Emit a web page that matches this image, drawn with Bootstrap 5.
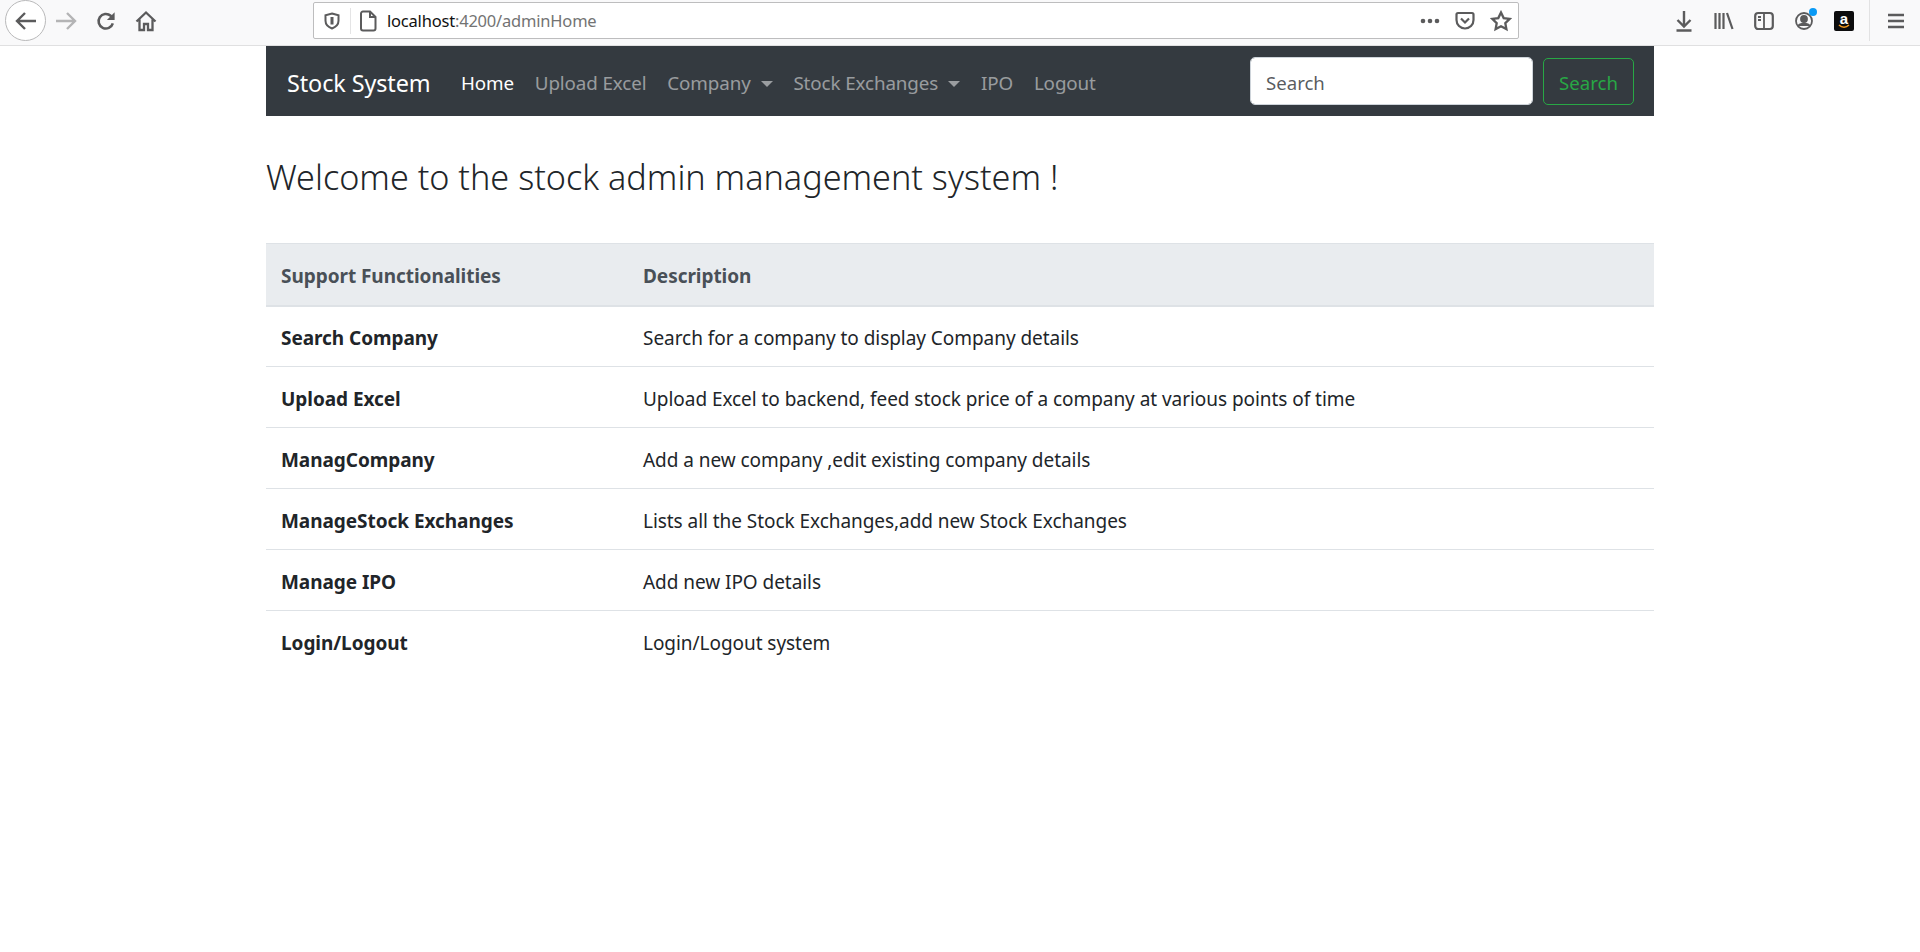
<!doctype html>
<html lang="en"><head><meta charset="utf-8"><title>Stock System</title>
<link rel="stylesheet" href="https://cdn.jsdelivr.net/npm/bootstrap@5.3.0/dist/css/bootstrap.min.css">
<style>
html,body{height:100%;overflow:hidden}
body{font-family:"Noto Sans","Open Sans",sans-serif;background:#fff;color:#212529}
.chrome{height:46px;background:#f9f9fa;border-bottom:1px solid #e0e0e1;padding-left:5px}
.backbtn{width:41px;height:41px;border-radius:50%;border:1px solid #b9b9ba;background:#fff;flex:none}
.tool{width:40px;height:41px;flex:none}
.tool svg,.backbtn svg,.urlbar svg,.rtools svg{display:block;fill:none;stroke:#5b5b5c;stroke-width:2.2}
.tool .fwd{stroke:#b4b4b5}
.urlbar{width:1206px;height:37px;margin-left:147px;background:#fff;border:1px solid #bdbdbe;border-radius:2px;margin-top:2px;flex:none}
.urltext{font-size:16.500px;color:#737373;letter-spacing:-.2px;padding-top:2px;margin-left:10px}
.urltext b{font-weight:400;color:#111}
.shieldic{margin-left:9px}
.sep{width:1px;height:26px;background:#e4e4e5;margin:0 8px 0 9px}
.urlend{margin-left:auto;padding-right:6px}
.urlend .pocket{margin:0 15px}
.rtools{margin-left:auto;padding-right:15px;height:41px}
.rt{width:40px;height:41px;flex:none;position:relative}
.dot{position:absolute;width:8px;height:8px;background:#0a9af5;border-radius:50%;right:7px;top:8px}
.amz{position:relative;display:block;width:20px;height:20px;border-radius:2px;background:#0c0c0d;color:#fff;font-size:15px;font-weight:700;line-height:15px;text-align:center;font-family:"Liberation Sans",sans-serif}
.amz svg{position:absolute;left:4px;bottom:1px;stroke:#f29a1f!important;stroke-width:1.6!important}
.vsep{width:1px;height:41px;background:#e2e2e3;margin:0 17px 0 5px}
.pagewrap{width:1388px;margin:0 auto}
.navbar.topnav{--bs-navbar-nav-link-padding-x:10.400px;height:70px;padding:0 20px 0 21px;background:#343a40}
.topnav .navbar-brand{font-size:23.400px;color:#fff;padding:5px 0 0;margin:0 20px 0 0;letter-spacing:-.1px}
.topnav .nav-link{font-size:18.800px;padding-top:5px;padding-bottom:0;color:rgba(255,255,255,.5);letter-spacing:-.1px}
.topnav .dropdown-toggle::after{margin-left:10px;vertical-align:.2em;border-top-width:.36em;border-left-width:.36em;border-right-width:.36em}
.topnav .nav-link.active{color:#fff}
.searchbox{width:283px;height:48px;font-size:18.600px;padding:7px 15px 5px;border-radius:5px;margin-right:10px;border-color:#ced4da}
.searchbtn{height:47px;width:91px;font-size:18.600px;padding:3px 0 0;border-radius:5px;color:#28a745;border-color:#28a745}
.welcome{font-size:34.200px;font-weight:300;margin:0;padding:40px 0 46px;line-height:41px;letter-spacing:0}
.infotable{font-size:19px;table-layout:fixed;letter-spacing:-.05px;margin:0}
.infotable th,.infotable td{padding:4px 15px 0;height:61px;vertical-align:middle;border-color:#dee2e6}
.infotable thead th{background:#e9ecef;color:#495057;height:62px;border-top:1px solid #dee2e6;border-bottom:2px solid #dee2e6;font-weight:700}
.infotable tbody tr:last-child td,.infotable tbody tr:last-child th{border-bottom:0}
.col-one{width:362px}
</style></head>
<body>
<div class="chrome d-flex align-items-start">
  <div class="backbtn d-flex align-items-center justify-content-center"><svg width="24" height="24" viewBox="0 0 24 24"><path d="M22 12H3M11 4l-8 8 8 8" stroke-width="2.400"/></svg></div>
  <div class="tool d-flex align-items-center justify-content-center"><svg class="fwd" width="24" height="24" viewBox="0 0 24 24"><path d="M2 12h19M13 4l8 8-8 8" stroke-width="2.400"/></svg></div>
  <div class="tool d-flex align-items-center justify-content-center"><svg width="20" height="20" viewBox="0 0 22 22"><path d="M18.500 13.500a8 8 0 1 1-2.300-8.200L19 8" stroke-width="2.800"/><path d="M20.500 1.500v8.500H12z" fill="#5b5b5c" stroke="none"/></svg></div>
  <div class="tool d-flex align-items-center justify-content-center"><svg width="22" height="22" viewBox="0 0 22 22"><path d="M1.500 11.500L11 2.500l9.500 9M4.500 9.500V20h4.500v-6h4v6h4.500V9.500" stroke-width="2.300"/></svg></div>
  <div class="urlbar d-flex align-items-center">
    <span class="shieldic"><svg width="18" height="18" viewBox="0 0 18 18"><path d="M9 1.500l6.500 1.700v5.600c0 3.800-2.800 6.300-6.500 7.700-3.700-1.400-6.500-3.900-6.500-7.700V3.200z" stroke-width="2"/><path d="M9 5v7.500" stroke-width="3"/></svg></span>
    <span class="sep"></span>
    <span><svg width="18" height="22" viewBox="0 0 18 22"><path d="M4 1.500h7l5.500 5.500v11.500a2 2 0 0 1-2 2H4a2 2 0 0 1-2-2v-15a2 2 0 0 1 2-2zM11 1.500V7h5.500" stroke-width="2"/></svg></span>
    <span class="urltext"><b>localhost</b>:4200/adminHome</span>
    <span class="urlend d-flex align-items-center">
      <svg width="20" height="6" viewBox="0 0 20 6" style="fill:#5b5b5c;stroke:none"><circle cx="3" cy="3" r="2.300"/><circle cx="10" cy="3" r="2.300"/><circle cx="17" cy="3" r="2.300"/></svg>
      <svg class="pocket" width="20" height="20" viewBox="0 0 20 20"><path d="M3 2h14a1.500 1.500 0 0 1 1.500 1.500V9a8.500 8.500 0 0 1-17 0V3.500A1.500 1.500 0 0 1 3 2z"/><path d="M6 7.500l4 4 4-4"/></svg>
      <svg width="22" height="22" viewBox="0 0 22 22" style="stroke-width:2.300"><path d="M11 2.500l2.700 5.600 6 .8-4.400 4.200 1.100 6L11 16.200l-5.400 2.900 1.100-6L2.300 8.900l6-.8z"/></svg>
    </span>
  </div>
  <div class="rtools d-flex align-items-center">
    <div class="rt d-flex align-items-center justify-content-center"><svg width="20" height="22" viewBox="0 0 20 22" style="stroke-width:2.400"><path d="M10 1v15M3.500 10l6.500 6.500L16.500 10M2.500 20.500h15"/></svg></div>
    <div class="rt d-flex align-items-center justify-content-center"><svg width="20" height="20" viewBox="0 0 20 20"><path d="M1.500 2v16M5.500 2v16M9.500 2v16M13 2l5.500 16"/></svg></div>
    <div class="rt d-flex align-items-center justify-content-center"><svg width="20" height="20" viewBox="0 0 20 20"><rect x="1.200" y="2" width="17.600" height="16" rx="3"/><path d="M10 2v16M4 6h3M4 9h3" stroke-width="1.800"/></svg></div>
    <div class="rt d-flex align-items-center justify-content-center"><svg width="20" height="20" viewBox="0 0 20 20" style="stroke-width:1.800"><circle cx="10" cy="10" r="8"/><circle cx="10" cy="8" r="3" fill="#5b5b5c"/><path d="M4.500 15c1-3 10-3 11 0" fill="#5b5b5c"/></svg><span class="dot"></span></div>
    <div class="rt d-flex align-items-center justify-content-center"><span class="amz">a<svg width="12" height="6" viewBox="0 0 12 6"><path d="M1 1c3 3 7 3 10 0"/></svg></span></div>
    <span class="vsep"></span>
    <svg width="18" height="16" viewBox="0 0 18 16" style="stroke-width:2.400"><path d="M1 2h16M1 8h16M1 14h16"/></svg>
  </div>
</div>
<div class="pagewrap">
  <nav class="navbar navbar-expand-lg topnav">
    <a class="navbar-brand" href="#">Stock System</a>
    <ul class="navbar-nav me-auto">
      <li class="nav-item"><a class="nav-link active" href="#">Home</a></li>
      <li class="nav-item"><a class="nav-link" href="#">Upload Excel</a></li>
      <li class="nav-item"><a class="nav-link dropdown-toggle" href="#">Company</a></li>
      <li class="nav-item"><a class="nav-link dropdown-toggle" href="#">Stock Exchanges</a></li>
      <li class="nav-item"><a class="nav-link" href="#">IPO</a></li>
      <li class="nav-item"><a class="nav-link" href="#">Logout</a></li>
    </ul>
    <form class="d-flex align-items-center">
      <input class="form-control searchbox" type="search" placeholder="Search">
      <button class="btn btn-outline-success searchbtn" type="button">Search</button>
    </form>
  </nav>
  <h1 class="welcome">Welcome to the stock admin management system !</h1>
  <table class="table infotable">
    <colgroup><col class="col-one"><col></colgroup>
    <thead><tr><th>Support Functionalities</th><th>Description</th></tr></thead>
    <tbody>
      <tr><th>Search Company</th><td>Search for a company to display Company details</td></tr>
      <tr><th>Upload Excel</th><td>Upload Excel to backend, feed stock price of a company at various points of time</td></tr>
      <tr><th>ManagCompany</th><td>Add a new company ,edit existing company details</td></tr>
      <tr><th>ManageStock Exchanges</th><td>Lists all the Stock Exchanges,add new Stock Exchanges</td></tr>
      <tr><th>Manage IPO</th><td>Add new IPO details</td></tr>
      <tr><th>Login/Logout</th><td>Login/Logout system</td></tr>
    </tbody>
  </table>
</div>
</body></html>
